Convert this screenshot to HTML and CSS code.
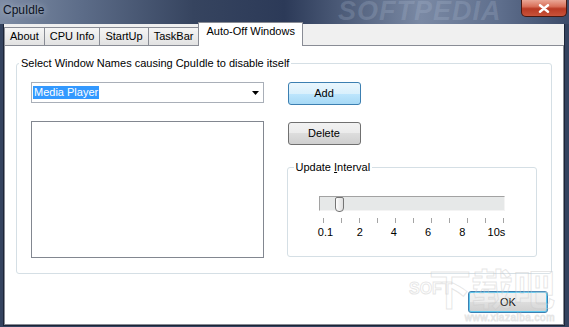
FILE: index.html
```html
<!DOCTYPE html>
<html lang="en">
<head>
    <meta charset="UTF-8">
    <meta name="viewport" content="width=device-width, initial-scale=1.0">
    <title>CpuIdle</title>
    <link rel="stylesheet" href="styles.css">
</head>
<body>
    <div class="window">
        <div class="titlebar">
            <span class="title">CpuIdle</span>
            <span class="brand">SOFTPEDIA</span>
            <button class="close" title="Close">
                <svg width="12" height="9" viewBox="0 0 12 9"><path d="M2 1.2l8 6.6M10 1.2l-8 6.6" stroke="#fff" stroke-width="2.4" stroke-linecap="round"/></svg>
            </button>
        </div>

        <div class="client">
            <div class="tabs">
                <span class="tab">About</span>
                <span class="tab">CPU Info</span>
                <span class="tab">StartUp</span>
                <span class="tab">TaskBar</span>
                <span class="tab active">Auto-Off Windows</span>
            </div>

            <div class="panel">
                <fieldset class="group">
                    <legend>Select Window Names causing CpuIdle to disable itself</legend>
                    <div class="group-body">
                        <div class="left-col">
                            <div class="combo">
                                <span class="selected">Media Player</span>
                                <svg width="7" height="4" viewBox="0 0 7 4"><polygon points="0,0 7,0 3.5,4" fill="#000"/></svg>
                            </div>
                            <div class="listbox"></div>
                        </div>

                        <div class="right-col">
                            <button class="btn hot">Add</button>
                            <button class="btn delete">Delete</button>

                            <fieldset class="group interval">
                                <legend>Update <u>I</u>nterval</legend>
                                <div class="interval-body">
                                    <div class="track"><span class="thumb"></span></div>
                                    <div class="ticks">
                                        <i></i><i></i><i></i><i></i><i></i><i></i><i></i><i></i><i></i><i></i><i></i>
                                    </div>
                                    <div class="scale">
                                        <span>0.1</span><span>2</span><span>4</span><span>6</span><span>8</span><span>10s</span>
                                    </div>
                                </div>
                            </fieldset>
                        </div>
                    </div>
                </fieldset>

                <div class="footer">
                    <button class="btn ok">OK</button>
                </div>

                <!-- site watermark burned into the screenshot -->
                <div class="watermark">
                    <span class="wm-soft">SOFT</span>
                    <span class="wm-big">下载吧</span>
                    <span class="wm-url">www.xiazaiba.com</span>
                </div>
            </div>
        </div>
    </div>
</body>
</html>
```

FILE: styles.css
```css
body {
    margin: 0;
    font-family: "Liberation Sans", Arial, sans-serif;
    font-size: 11px;
    line-height: 13px;
    color: #000;
}

.window {
    width: 569px;
    height: 327px;
    display: flex;
    flex-direction: column;
    background: #34435f;
    overflow: hidden;
}

/* title bar */
.titlebar {
    height: 24px;
    flex: none;
    display: flex;
    align-items: flex-start;
    padding-left: 3px;
    position: relative;
    overflow: hidden;
    background: linear-gradient(90deg, #7d8ca4 0%, #5d6d89 14%, #36445f 34%, #2c3a58 50%, #4c5b78 60%, #7a89a4 74%, #5e6e8c 88%, #3c4b69 100%);
}
.title {
    margin-top: 3px;
    font-size: 12px;
    line-height: 14px;
    color: #0c1222;
    text-shadow: 0 0 6px rgba(230, 236, 245, 0.7);
    position: relative;
    z-index: 1;
}
.brand {
    position: absolute;
    left: 338px;
    top: -3px;
    font-size: 27px;
    line-height: 28px;
    font-weight: bold;
    font-style: italic;
    color: rgba(180, 194, 216, 0.22);
    letter-spacing: 1px;
}
.close {
    margin-left: auto;
    margin-right: 2px;
    width: 46px;
    height: 17px;
    padding: 0;
    border: 1px solid #4a1810;
    border-top: none;
    border-radius: 0 0 5px 5px;
    background: linear-gradient(#eaa796 0%, #d9705a 40%, #b93a24 55%, #c9533a 100%);
    display: flex;
    align-items: center;
    justify-content: center;
    position: relative;
    z-index: 1;
}

/* client area */
.client {
    flex: 1;
    margin: 0 5px 5px 4px;
    background: #f0f0f0;
    display: flex;
    flex-direction: column;
    box-shadow: 0 0 0 1px #1c2538;
}

.tabs {
    height: 21px;
    flex: none;
    display: flex;
    align-items: flex-end;
}
.tab {
    height: 17px;
    line-height: 17px;
    padding: 0 5px;
    border: 1px solid #898c95;
    border-bottom: none;
    margin-right: -1px;
    background: linear-gradient(#f5f5f5, #e2e2e2);
}
.tab.active {
    height: 20px;
    padding: 0 7px 3px;
    margin-bottom: -1px;
    background: #fff;
    position: relative;
    z-index: 1;
}

.panel {
    flex: 1;
    border: 1px solid #898c95;
    background: #fff;
    padding: 11px;
    display: flex;
    flex-direction: column;
    position: relative;
}

/* group boxes */
.group {
    margin: 0;
    padding: 0;
    min-width: 0;
    border: 1px solid #d5dfe5;
    border-radius: 3px;
}
.group legend {
    padding: 0 2px;
    margin-left: 2px;
    line-height: 13px;
}
.group-body {
    display: flex;
    gap: 24px;
    padding: 12px 14px 15px;
}

.left-col {
    width: 233px;
}
.combo {
    height: 21px;
    box-sizing: border-box;
    border: 1px solid #a9afb8;
    display: flex;
    align-items: center;
    justify-content: space-between;
    padding: 0 4px 0 1px;
}
.selected {
    background: #3399ff;
    color: #fff;
    padding: 0 1px;
}
.listbox {
    height: 137px;
    box-sizing: border-box;
    margin-top: 18px;
    border: 1px solid #828790;
}

.right-col {
    width: 250px;
}

/* buttons */
.btn {
    display: block;
    width: 73px;
    height: 23px;
    box-sizing: border-box;
    padding: 0;
    border: 1px solid #707070;
    border-radius: 3px;
    background: linear-gradient(#f2f2f2 0%, #ebebeb 50%, #dddddd 50%, #cfcfcf 100%);
    font: inherit;
    font-weight: normal;
    color: #000;
}
.btn.hot {
    border-color: #3c7fb1;
    background: linear-gradient(#eaf6fd 0%, #d9f0fc 50%, #bee6fd 50%, #a7d9f5 100%);
}
.btn.delete {
    margin-top: 17px;
}
.btn.ok {
    width: 80px;
    height: 22px;
    border-color: #3c7fb1;
    box-shadow: inset 0 0 0 1px #5ec8ef;
}

.interval {
    margin: 16px 0 0 -1px;
}
.interval legend {
    margin-left: 6px;
}
.interval-body {
    padding: 22px 0 17px 31px;
}

/* trackbar */
.track {
    width: 186px;
    height: 15px;
    box-sizing: border-box;
    border: 1px solid;
    border-color: #a2a2a2 #f4f4f4 #f4f4f4 #a2a2a2;
    background: #e6e8e8;
    position: relative;
}
.thumb {
    position: absolute;
    left: 15px;
    top: 0;
    width: 9px;
    height: 15px;
    box-sizing: border-box;
    border: 1px solid #747474;
    border-radius: 2px 2px 4px 4px;
    background: linear-gradient(90deg, #fdfdfd, #dedede);
}
.ticks {
    width: 181px;
    margin: 7px 0 0 4px;
    display: flex;
    justify-content: space-between;
}
.ticks i {
    width: 1px;
    height: 5px;
    background: #a4a4a4;
}
.scale {
    width: 189px;
    margin: 3px 0 0 -2px;
    display: flex;
    justify-content: space-between;
}
.scale span {
    width: 18px;
    text-align: center;
}

.footer {
    margin-top: 17px;
    padding-right: 4px;
    display: flex;
    justify-content: flex-end;
}

/* faint watermark */
.watermark {
    position: absolute;
    right: 4px;
    bottom: 0;
    width: 150px;
    height: 62px;
    pointer-events: none;
    color: rgba(255, 255, 255, 0.15);
    -webkit-text-stroke: 1px rgba(200, 200, 200, 0.45);
}
.wm-big {
    position: absolute;
    right: 4px;
    top: 0;
    font-family: "Noto Sans CJK SC", sans-serif;
    font-size: 42px;
    line-height: 50px;
    font-weight: bold;
}
.wm-soft {
    position: absolute;
    left: 0;
    top: 20px;
    font-size: 16px;
    font-weight: bold;
}
.wm-url {
    position: absolute;
    right: 4px;
    bottom: 1px;
    font-size: 10px;
    line-height: 10px;
    letter-spacing: 0.5px;
}
```
